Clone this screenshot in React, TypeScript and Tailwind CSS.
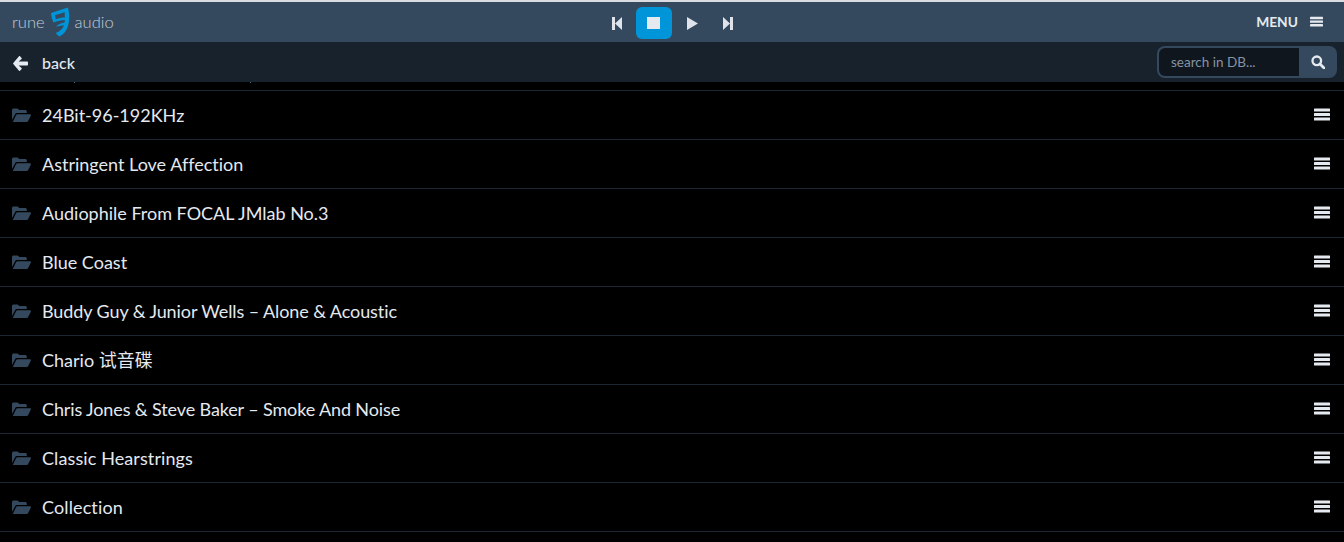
import React from "react";

const items = [
  { t: "24Bit-96-192KHz", c: "" },
  { t: "Astringent Love Affection", c: "" },
  { t: "Audiophile From FOCAL JMlab No.3", c: "" },
  { t: "Blue Coast", c: "" },
  { t: "Buddy Guy & Junior Wells – Alone & Acoustic", c: "tracking-[-0.09px]" },
  { t: "Chario 试音碟", c: "" },
  { t: "Chris Jones & Steve Baker – Smoke And Noise", c: "tracking-[-0.12px]" },
  { t: "Classic Hearstrings", c: "tracking-[0.1px]" },
  { t: "Collection", c: "tracking-[0.12px]" },
];

const Bars = ({ cls }: { cls: string }) => (
  <svg viewBox="0 0 16 14" className={cls} fill="currentColor">
    <rect x="0" y="0.5" width="16" height="3" rx="0.5" />
    <rect x="0" y="5" width="16" height="3" rx="0.5" />
    <rect x="0" y="9.5" width="16" height="3" rx="0.5" />
  </svg>
);

const Folder = () => (
  <svg viewBox="0 0 19 14" className="w-[19px] h-[14px] text-[#34495e] shrink-0" fill="currentColor">
    <path d="M0 12V2C0 1 .7.4 1.6.4h3.6c.7 0 1 .3 1.4.8l.6.7h6.1c.9 0 1.5.6 1.5 1.5V5H5.2C4.1 5 3.5 5.5 3 6.4L0 12Z" />
    <path d="M.8 14 4 7.2c.3-.7.8-1 1.6-1h12.2c.9 0 1.4.7 1 1.5l-2.6 5.3c-.3.6-.8 1-1.6 1H.8Z" />
  </svg>
);

const Logo = () => (
  <svg viewBox="0 0 20 30" className="w-[20px] h-[30px] mx-[5px]" fill="#0095d8" fillRule="evenodd">
    <path d="M1 6 L18 .5 C19.8 7 19.6 14 18 19 C16.4 24 13.5 27.5 9.5 29.5 C8 28.7 6.8 27.5 5.8 26 C9.5 25 12.6 22 14 18.3 L6 19.5 C8 17.5 11 16.2 14.6 15.6 L14.9 13 C11 13 7.5 14 3.5 15.5 C2.2 12.5 1.3 9.5 1 6 Z M5 8.3 L14.6 5.3 L14.9 10.4 C11.5 10.4 8.5 11 5.8 12.2 Z" />
  </svg>
);

export default function App() {
  return (
    <div className="h-[542px] overflow-hidden bg-black font-['Lato',sans-serif] flex flex-col [font-variant-ligatures:none]">
      <header className="h-[42px] shrink-0 bg-[#34495e] border-t-2 border-[#d9dde2] relative flex items-center justify-between pl-3 pr-[21px]">
        <div className="flex items-center text-[#c3cdd9] text-[16.5px] font-light">
          <span>rune</span>
          <Logo />
          <span>audio</span>
        </div>
        <div className="absolute left-[600px] top-[5px] flex items-center">
          <button className="w-[36px] h-[32px] pr-[2px] flex items-center justify-center text-[#dfe4ec]">
            <svg viewBox="0 0 10 13" className="w-[10px] h-[13px]" fill="currentColor">
              <path d="M0 0h3v13H0zM3 6.5l7-6.5v13z" />
            </svg>
          </button>
          <button className="w-[36px] h-[32px] pr-[1px] rounded-md bg-[#0095d8] flex items-center justify-center">
            <span className="w-[13px] h-[12px] bg-[#e5e9f0]" />
          </button>
          <button className="w-[40px] h-[32px] flex items-center justify-center text-[#dfe4ec]">
            <svg viewBox="0 0 11 13" className="w-[11px] h-[13px]" fill="currentColor">
              <path d="M0 0l11 6.5-11 6.5z" />
            </svg>
          </button>
          <button className="w-[32px] h-[32px] flex items-center justify-center text-[#dfe4ec]">
            <svg viewBox="0 0 10 13" className="w-[10px] h-[13px]" fill="currentColor">
              <path d="M7 0h3v13H7zM7 6.5L0 0v13z" />
            </svg>
          </button>
        </div>
        <div className="flex items-center gap-[12px] text-[#e5e9f0]">
          <span className="text-[13.8px] font-bold">MENU</span>
          <Bars cls="w-[13px] h-[12px]" />
        </div>
      </header>
      <div className="h-[40px] shrink-0 bg-[#18222d] flex items-center justify-between pl-[13px] pr-[7px]">
        <div className="flex items-center text-[#e5e9f0]">
          <svg viewBox="0 0 15 15" className="w-[15px] h-[15px] translate-y-[1px]" fill="currentColor">
            <path d="M7 .3 8.6 1.9c.3.3.3.7 0 1L5.6 5.6H14c.6 0 1 .4 1 1v1.8c0 .6-.4 1-1 1H5.6l3 2.7c.3.3.3.7 0 1L7 14.7c-.3.3-.7.3-1 0L.3 8.1c-.3-.3-.3-.8 0-1.1L6 .3c.3-.3.7-.3 1 0Z" />
          </svg>
          <span className="ml-[14px] text-[16px] font-medium translate-y-[1px]">back</span>
        </div>
        <div className="w-[180px] h-[32px] rounded-lg bg-[#34495e] p-[2px] flex">
          <div className="w-[140px] h-[28px] rounded-l-md bg-[#10161d] pl-[12px] text-[13.5px] leading-[28px] text-[#8593a3]">
            search in DB...
          </div>
          <div className="flex-1 pl-[2px] flex items-center justify-center text-[#e5e9f0]">
            <svg viewBox="0 0 14 14" className="w-[14px] h-[14px]" fill="none" stroke="currentColor">
              <circle cx="5.8" cy="5.8" r="4.3" strokeWidth="2.3" />
              <path d="M9 9l4 4" strokeWidth="2.8" strokeLinecap="round" />
            </svg>
          </div>
        </div>
      </div>
      <div className="h-[9px] shrink-0 border-b border-[#1c2733] relative">
        <span className="absolute left-[74px] top-0 w-[1px] h-[1px] bg-[#3b6a8f]" />
        <span className="absolute left-[250px] top-0 w-[1px] h-[1px] bg-[#3b6a8f]" />
      </div>
      <ul>
        {items.map(({ t, c }) => (
          <li
            key={t}
            className="h-[49px] border-b border-[#1c2733] flex items-center pl-[12px] pr-[14px] text-[18px] text-[#e5e9f0] font-['Lato','Noto_Sans_CJK_SC',sans-serif]"
          >
            <Folder />
            <span className={"ml-[11px] flex-1 " + c}>{t}</span>
            <Bars cls="w-[16px] h-[14px]" />
          </li>
        ))}
      </ul>
    </div>
  );
}
